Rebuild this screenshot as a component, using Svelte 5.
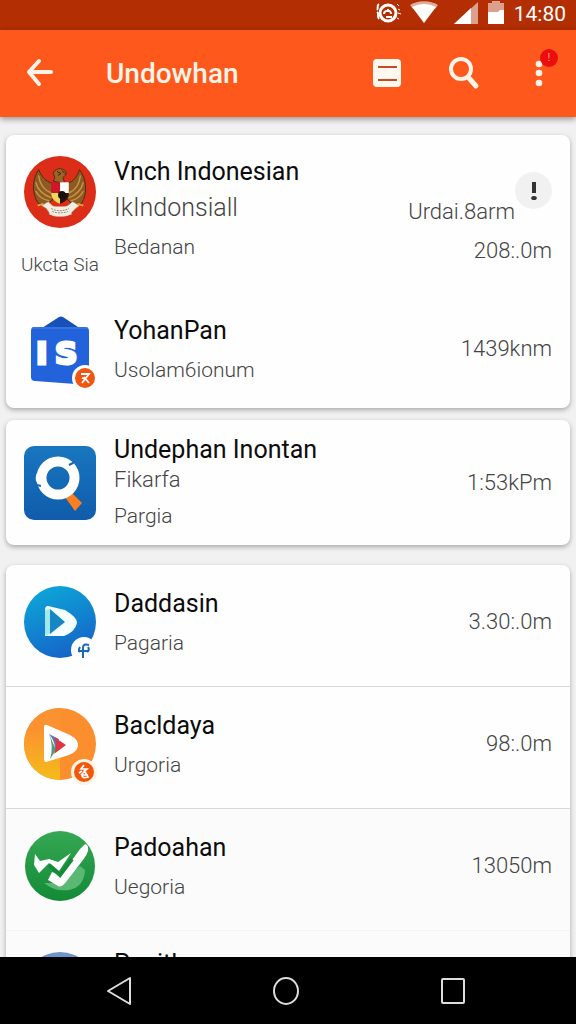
<script>
  const cards = [
    [
      {
        icon: 'garuda',
        caption: 'Ukcta Sia',
        title: 'Vnch Indonesian',
        headline: 'IkIndonsiall',
        sub: 'Bedanan',
        note: 'Urdai.8arm',
        value: '208:.0m'
      },
      { icon: 'shop', title: 'YohanPan', sub: 'Usolam6ionum', value: '1439knm' }
    ],
    [
      { icon: 'search', title: 'Undephan Inontan', detail: 'Fikarfa', sub: 'Pargia', value: '1:53kPm' }
    ],
    [
      { icon: 'play', title: 'Daddasin', sub: 'Pagaria', value: '3.30:.0m' },
      { icon: 'store', title: 'Bacldaya', sub: 'Urgoria', value: '98:.0m' },
      { icon: 'check', title: 'Padoahan', sub: 'Uegoria', value: '13050m' },
      { icon: 'blue', title: 'Panitlan' }
    ]
  ]
</script>

<div class="screen">
  <div class="status">
    <svg width="28" height="24" viewBox="0 0 28 24" fill="none" stroke="#fff" stroke-width="2">
      <circle cx="14" cy="13" r="8" stroke-width="3" />
      <path d="M10 14c0-4 7-5 7 0M12 17h6M14 9v3" />
      <path d="M5 4C2 6 5 8 3 10M3 12c3 2-1 4 2 7" />
      <path d="M23 4l2 2M24 9l2 1M24 13l3 1M23 18l2 1" stroke-width="1" />
    </svg>
    <svg class="wifi" width="28" height="24" viewBox="0 0 28 24">
      <path d="M0 5C8 0 20 0 28 5l-3 4C18 5 10 5 3 9z" fill="#fff" opacity="0.6" />
      <path d="M2 7C10 3 18 3 26 7L14 23z" fill="#fff" />
    </svg>
    <svg class="signal" width="24" height="24" viewBox="0 0 24 24">
      <path d="M24 2v22H0z" fill="#fff" opacity="0.55" />
      <path d="M17 8v16H0z" fill="#fff" />
    </svg>
    <svg class="battery" width="16" height="24" viewBox="0 0 16 24">
      <path d="M0 3h4V1h8v2h4v10H0z" fill="#fff" opacity="0.55" />
      <path d="M0 12h10l2-2h4v14H0z" fill="#fff" />
    </svg>
    <span class="clock">14:80</span>
  </div>

  <header>
    <button class="back" aria-label="Back">
      <svg width="28" height="28" viewBox="0 0 28 28" fill="none" stroke="#fff4e8" stroke-width="4" stroke-linecap="round" stroke-linejoin="round">
        <path d="M25 12H3M13 1L3 12l10 12" />
      </svg>
    </button>
    <h1>Undowhan</h1>
    <div class="actions">
      <button aria-label="List">
        <svg width="28" height="28" viewBox="0 0 28 28">
          <rect y="-1" width="28" height="28" rx="4" fill="#fff8ef" />
          <path d="M5 7h19M5 20h19" stroke="#c84a20" stroke-width="2" />
        </svg>
      </button>
      <button aria-label="Search">
        <svg width="32" height="32" viewBox="0 0 32 32" fill="none" stroke="#fff4e8" stroke-linecap="round">
          <circle cx="14" cy="11" r="10" stroke-width="4" />
          <path d="M21 19l8 9" stroke-width="5" />
        </svg>
      </button>
      <button aria-label="More">
        <svg width="8" height="28" viewBox="0 0 8 28" fill="#fff4e8">
          <circle cx="4" cy="4" r="3.3" />
          <circle cx="4" cy="13" r="3.3" />
          <circle cx="4" cy="23" r="3.3" />
        </svg>
        <span class="dot">!</span>
      </button>
    </div>
  </header>

  <main>
    {#each cards as rows}
      <ul class="card">
        {#each rows as row}
          <li class:featured={row.headline} class:compact={row.detail} class:peek={!row.sub}>
            <div class="avatar">
              {#if row.icon === 'garuda'}
                <svg viewBox="0 0 74 74">
                  <circle cx="37" cy="37" r="37" fill="#dc2d18" />
                  <path d="M15 14C9 23 7 38 15 49l9 1 7-7-2-15c-7-2-11-7-14-14z" fill="#8c5a22" stroke="#4d2c10" />
                  <path d="M57 14c7 9 9 24 2 35l-9 1-7-7 2-15c6-2 10-7 12-14z" fill="#8c5a22" stroke="#4d2c10" />
                  <path d="M15 20c1 9 6 15 13 18M12 27c2 8 8 13 16 16M12 36c3 6 8 9 14 10M58 20c-1 9-5 15-12 18M61 27c-2 8-7 13-15 16M61 36c-3 6-7 9-13 10" stroke="#c79345" stroke-width="1.5" fill="none" />
                  <path d="M30 26c2-3 2-5 0-8 1-5 9-7 13-2 1 3-1 5-3 6l2 6z" fill="#9d6425" stroke="#4d2c10" />
                  <path d="M34 16l4 2-3 2M39 15l3 3" stroke="#3a200d" fill="none" />
                  <path d="M28 27h9v11h-9z" fill="#cf1527" />
                  <path d="M37 27h9v11h-9z" fill="#fff" />
                  <path d="M28 38h9v11c-6-2-9-6-9-11z" fill="#f0d65a" />
                  <path d="M37 38h9c0 6-3 9-9 11z" fill="#2a130d" />
                  <circle cx="39" cy="40" r="4" fill="#17100e" />
                  <path d="M18 51l7-4 4 4c5 3 11 3 16 0l5-4 7 4-4 3-6 6c-6 3-14 3-20 0l-4-6z" fill="#f5eedf" stroke="#a99a84" stroke-width="0.7" />
                  <path d="M27 52h20l2 8q-12 4-23 0z" fill="#f5eedf" />
                  <path d="M28 54c6 3 12 3 18 0M29 57c5 2 11 2 16 0" stroke="#8c8880" stroke-dasharray="2 1" fill="none" />
                  <path d="M14 51l6-2M55 49l6 2" stroke="#e5a52c" stroke-width="2" />
                </svg>
              {:else if row.icon === 'shop'}
                <svg viewBox="0 0 72 72">
                  <path d="M18 15L35 4q2-1 4 0l18 12z" fill="#1551b8" />
                  <path d="M10 14h51q4 0 4 4v54L11 68q-4 0-4-4V18q0-4 3-4z" fill="#2262da" />
                  <path d="M8 15h56" stroke="#4a84e7" />
                  <text x="12 31" y="51" font-family="DejaVu Sans, sans-serif" font-weight="700" font-size="31" fill="#fff" stroke="#fff" stroke-width="3">IS</text>
                  <circle cx="61" cy="65" r="11.5" fill="#f15512" stroke="#fff" stroke-width="3" />
                  <path d="M57 61h8l-7 9M60 64l5 6M58 65l4 1" stroke="#fff" stroke-width="1.8" fill="none" />
                </svg>
              {:else if row.icon === 'search'}
                <svg viewBox="0 0 72 74">
                  <defs>
                    <linearGradient id="blue-tile" x2="0" y2="1">
                      <stop stop-color="#1976bf" />
                      <stop offset="1" stop-color="#0f5cab" />
                    </linearGradient>
                  </defs>
                  <rect width="72" height="74" rx="10" fill="url(#blue-tile)" />
                  <path d="M41 51l7-4 10 10-7 8z" fill="#fb7e20" />
                  <circle cx="34" cy="32" r="16.5" fill="none" stroke="#fff" stroke-width="10" />
                  <path d="M13 27q-4 7 3 13l4-9zM46 15l5 2-4 5z" fill="#fff" />
                  <path d="M45 19l6-3M13 39l4 1" stroke="#1768b3" stroke-width="2" />
                </svg>
              {:else if row.icon === 'play'}
                <svg viewBox="0 0 72 72">
                  <defs>
                    <linearGradient id="cyan" x1="0.2" x2="0.6" y2="1">
                      <stop stop-color="#0ca8d8" />
                      <stop offset="1" stop-color="#1564c8" />
                    </linearGradient>
                  </defs>
                  <circle cx="36" cy="36" r="36" fill="url(#cyan)" />
                  <path d="M24 20l17 4q13 8 12 13-2 9-13 13H21V24q0-4 3-4z" fill="#f4ffff" />
                  <path d="M26 23l15 13-15 12z" fill="#1687c3" />
                  <path d="M21 24l5-1v25l-5 1z" fill="#9de9ed" />
                  <circle cx="60" cy="64" r="13" fill="#fff" />
                  <path d="M59 72V62q0-5 6-3M54 65h11M56 61q-2 3 0 5M63 66q3-2 1-5" stroke="#1769be" stroke-width="2" fill="none" />
                </svg>
              {:else if row.icon === 'store'}
                <svg viewBox="0 0 72 72">
                  <defs>
                    <clipPath id="disc"><circle cx="36" cy="36" r="36" /></clipPath>
                    <linearGradient id="amber" x2="0" y2="1">
                      <stop offset="0.3" stop-color="#fb9231" />
                      <stop offset="1" stop-color="#f5bc19" />
                    </linearGradient>
                  </defs>
                  <g clip-path="url(#disc)">
                    <path d="M0 0h72v72H0z" fill="#fb8e2d" />
                    <path d="M0 0h36v72H0z" fill="url(#amber)" />
                  </g>
                  <path d="M20 19q0-3 3-2l23 10q9 5 8 11-1 6-9 9l-23 7q-2 0-2-3z" fill="#fff" />
                  <path d="M25 26q5 12 1 25l6-9z" fill="#4d9d75" />
                  <path d="M25 26l10 5-4 14q1-11-6-19z" fill="#6678b5" />
                  <path d="M30 29l12 8-12 9q4-9 0-17z" fill="#dc3545" />
                  <circle cx="60" cy="64" r="11.5" fill="#f1580e" stroke="#fff3e3" stroke-width="3" />
                  <path d="M60 57l-3 4h6l-6 6M60 62l4 7q-6 2-6-2h6M55 65l3-2" stroke="#fff" stroke-width="1.7" fill="none" />
                </svg>
              {:else if row.icon === 'check'}
                <svg viewBox="0 0 72 72">
                  <defs>
                    <linearGradient id="green" x2="0" y2="1">
                      <stop stop-color="#36a853" />
                      <stop offset="1" stop-color="#128a36" />
                    </linearGradient>
                  </defs>
                  <circle cx="36" cy="36" r="35" fill="url(#green)" />
                  <path d="M20 53q11 9 25 7 15-3 16-20l-5-4-25 17z" fill="#5bb873" />
                  <path d="M61 14q4 1 3 7-1 4-5 9L42 52q-5 6-8 4L24 50l4-8 8 3 5-5 15-21z" fill="#fff" />
                  <path d="M11 24l5 7 9-2 9 3 13-9-12 18-10-8-10 10-5-8z" fill="#fff" />
                  <path d="M25 35l11 10 12-16" stroke="#168c3b" stroke-width="4" fill="none" />
                </svg>
              {:else}
                <svg viewBox="0 0 72 72"><circle cx="36" cy="36" r="36" fill="#6e94c9" /></svg>
              {/if}
              {#if row.caption}
                <span class="caption">{row.caption}</span>
              {/if}
            </div>

            <div class="text">
              <h2>{row.title}</h2>
              {#if row.headline}<p class="headline">{row.headline}</p>{/if}
              {#if row.detail}<p class="detail">{row.detail}</p>{/if}
              {#if row.sub}<p class="sub">{row.sub}</p>{/if}
            </div>

            {#if row.value}
              <div class="side">
                {#if row.note}
                  <div class="note">
                    <span>{row.note}</span>
                    <button aria-label="Information">
                      <svg width="6" height="20" viewBox="0 0 6 20" fill="#333">
                        <path d="M1 1h4v11H1z" />
                        <ellipse cx="3" cy="17" rx="2.8" ry="2" />
                      </svg>
                    </button>
                  </div>
                {/if}
                <span>{row.value}</span>
              </div>
            {/if}
          </li>
        {/each}
      </ul>
    {/each}
  </main>

  <nav>
    <button aria-label="Back">
      <svg width="30" height="32" viewBox="0 0 30 32"><path d="M26 3v26L4 16z" /></svg>
    </button>
    <button aria-label="Home">
      <svg width="30" height="32" viewBox="0 0 30 32"><ellipse cx="15" cy="16" rx="12" ry="13" /></svg>
    </button>
    <button aria-label="Recent apps">
      <svg width="30" height="32" viewBox="0 0 30 32"><rect x="4" y="4" width="22" height="24" rx="1" /></svg>
    </button>
  </nav>
</div>

<style>
  :global(body) {
    background: #f1f1f2;
  }

  .screen {
    display: flex;
    flex-direction: column;
    height: 100vh;
    font-family: Roboto, "Liberation Sans", sans-serif;
    color: #444;
  }

  h1, h2, p, ul {
    margin: 0;
    padding: 0;
    font-weight: 400;
  }

  button {
    display: flex;
    align-items: center;
    justify-content: center;
    padding: 0;
    border: none;
    background: none;
    cursor: pointer;
  }

  svg {
    display: block;
    flex: none;
    overflow: visible;
  }

  .status {
    display: flex;
    flex: none;
    align-items: flex-start;
    justify-content: flex-end;
    height: 30px;
    padding-right: 10px;
    background: #b32e03;
    color: #fff;
  }

  .wifi {
    margin-left: 8px;
  }

  .signal {
    margin-left: 16px;
  }

  .battery {
    margin: 0 10px;
  }

  .clock {
    font-size: 21px;
    line-height: 28px;
  }

  header {
    display: flex;
    flex: none;
    align-items: center;
    height: 87px;
    padding: 0 13px 0 16px;
    background: #ff581d;
    box-shadow: 0 2px 6px rgba(0, 0, 0, 0.4);
    z-index: 1;
  }

  header button {
    position: relative;
    width: 48px;
    height: 48px;
  }

  h1 {
    flex: 1;
    margin-left: 42px;
    font-size: 28px;
    font-weight: 500;
    color: #fff4e8;
  }

  .actions {
    display: flex;
    gap: 28px;
  }

  .dot {
    position: absolute;
    top: -1px;
    right: 5px;
    width: 18px;
    border-radius: 50%;
    background: #ec0d0d;
    color: #ffb0a0;
    font-size: 10px;
    line-height: 18px;
  }

  main {
    flex: 1;
    min-height: 0;
    overflow: hidden;
    padding: 18px 6px 0;
  }

  .card {
    margin-bottom: 12px;
    border-radius: 8px;
    background: #fefefe;
    box-shadow: 0 2px 5px rgba(0, 0, 0, 0.3);
    list-style: none;
  }

  .card:last-child {
    margin-top: 20px;
  }

  li {
    display: flex;
    align-items: center;
    gap: 18px;
    padding: 21px 18px 28px;
  }

  .card:last-child li {
    border-bottom: 1px solid #d9d9db;
  }

  .card:last-child li:nth-child(n + 3) {
    border-color: #f4f4f4;
    background: #fbfbfb;
  }

  .card:first-child li:last-child {
    padding-bottom: 23px;
  }

  .avatar {
    flex: none;
    width: 72px;
  }

  .text {
    flex: 1;
    min-width: 0;
  }

  h2 {
    font-size: 25px;
    line-height: 36px;
    color: #0c0c0c;
    white-space: nowrap;
  }

  .sub {
    margin-top: 6px;
    font-size: 21px;
    font-weight: 300;
    line-height: 30px;
  }

  .headline {
    font-size: 25px;
    font-weight: 300;
    line-height: 36px;
  }

  .detail {
    font-size: 22px;
    font-weight: 300;
    line-height: 30px;
  }

  .side {
    font-size: 22px;
    font-weight: 300;
    line-height: 30px;
    text-align: right;
  }

  .caption {
    display: flex;
    justify-content: center;
    margin-top: 22px;
    font-size: 19px;
    font-weight: 300;
    line-height: 30px;
    white-space: nowrap;
  }

  .featured {
    align-items: flex-start;
    padding: 19px 18px 12px;
  }

  .featured .avatar {
    padding-top: 2px;
  }

  .featured .side {
    padding-top: 18px;
  }

  .note {
    display: flex;
    align-items: flex-start;
    margin-bottom: 9px;
  }

  .note span {
    margin-top: 25px;
  }

  .note button {
    width: 37px;
    height: 37px;
    border-radius: 50%;
    background: #f1f1f1;
  }

  .compact {
    padding: 15px 18px 14px;
  }

  .compact h2 {
    line-height: 30px;
  }

  .peek {
    align-items: flex-start;
  }

  .peek h2 {
    line-height: 24px;
  }

  nav {
    display: grid;
    flex: none;
    grid-template-columns: repeat(3, 1fr);
    height: 67px;
    padding: 0 40px 0 36px;
    background: #000;
    z-index: 1;
  }

  nav svg {
    fill: none;
    stroke: #ddd;
    stroke-width: 2;
    stroke-linejoin: round;
  }
</style>
